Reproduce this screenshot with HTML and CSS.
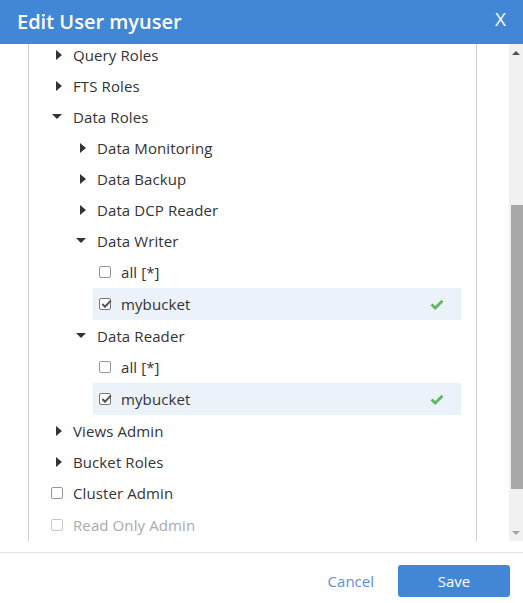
FILE: index.html
```html
<!DOCTYPE html>
<html>
<head>
<meta charset="utf-8">
<link rel="stylesheet" href="styles.css">
</head>
<body>
<div class="modal">
  <header class="hdr">
    <h1 class="title">Edit User myuser</h1>
    <span class="close">X</span>
  </header>
  <div class="body">
    <div class="panel">
      <ul class="tree">
        <li class="row l1"><span class="ico"><i class="tri-r"></i></span>Query Roles</li>
        <li class="row l1"><span class="ico"><i class="tri-r"></i></span>FTS Roles</li>
        <li class="row l1"><span class="ico"><i class="tri-d"></i></span>Data Roles</li>
        <li class="row l2"><span class="ico"><i class="tri-r"></i></span>Data Monitoring</li>
        <li class="row l2"><span class="ico"><i class="tri-r"></i></span>Data Backup</li>
        <li class="row l2"><span class="ico"><i class="tri-r"></i></span>Data DCP Reader</li>
        <li class="row l2"><span class="ico"><i class="tri-d"></i></span>Data Writer</li>
        <li class="row l3 tall"><span class="box"></span>all [*]</li>
        <li class="row l3 tall sel"><span class="box checked"><svg viewBox="0 0 12 12" width="12" height="12"><path d="M2.3 6 L5 8.7 L10.8 2.6" fill="none" stroke="#555" stroke-width="2"/></svg></span>mybucket<svg class="ok" viewBox="0 0 14 11" width="14" height="11"><path d="M1.5 5.5 L5.2 9 L12.5 1.8" fill="none" stroke="#5cb85c" stroke-width="2.8"/></svg></li>
        <li class="row l2"><span class="ico"><i class="tri-d"></i></span>Data Reader</li>
        <li class="row l3 tall"><span class="box"></span>all [*]</li>
        <li class="row l3 tall sel"><span class="box checked"><svg viewBox="0 0 12 12" width="12" height="12"><path d="M2.3 6 L5 8.7 L10.8 2.6" fill="none" stroke="#555" stroke-width="2"/></svg></span>mybucket<svg class="ok" viewBox="0 0 14 11" width="14" height="11"><path d="M1.5 5.5 L5.2 9 L12.5 1.8" fill="none" stroke="#5cb85c" stroke-width="2.8"/></svg></li>
        <li class="row l1"><span class="ico"><i class="tri-r"></i></span>Views Admin</li>
        <li class="row l1"><span class="ico"><i class="tri-r"></i></span>Bucket Roles</li>
        <li class="row l1 tall"><span class="box"></span>Cluster Admin</li>
        <li class="row l1 tall faded"><span class="box"></span>Read Only Admin</li>
      </ul>
    </div>
    <div class="gap"></div>
    <div class="scrollbar">
      <span class="sb-btn"><i class="sb-up"></i></span>
      <div class="track"><div class="thumb"></div></div>
      <span class="sb-btn"><i class="sb-down"></i></span>
    </div>
  </div>
  <footer class="ftr">
    <a class="cancel">Cancel</a>
    <button class="save">Save</button>
  </footer>
</div>
</body>
</html>
```
FILE: styles.css
```css
* { box-sizing: border-box; }
html, body { margin: 0; padding: 0; background: #fff; }
body {
  width: 523px;
  height: 603px;
  overflow: hidden;
  font-family: "Open Sans", "Noto Sans", sans-serif;
  color: #333;
}
.modal { display: flex; flex-direction: column; height: 603px; }
.hdr {
  height: 44px;
  background: #4286d6;
  color: #fff;
  display: flex;
  align-items: center;
  justify-content: space-between;
  padding: 0 17px 0 17px;
}
.title { margin: 0; font-size: 20px; font-weight: 600; letter-spacing: 0; margin-top: -2px; }
.close { font-size: 19px; font-weight: 400; margin-top: -6px; }
.body { display: flex; height: 497px; padding-left: 28px; }
.panel {
  width: 449px;
  height: 497px;
  border-left: 1px solid #d0d0d0;
  border-right: 1px solid #d0d0d0;
  overflow: hidden;
}
.tree { list-style: none; margin: -5px 0 0 0; padding: 0; }
.row {
  display: flex;
  align-items: center;
  height: 31px;
  font-size: 15px;
  letter-spacing: 0.1px;
  white-space: nowrap;
}
.row.tall { height: 32px; }
.l1 { padding-left: 22px; }
.l2 { padding-left: 46px; }
.l3 { margin-left: 64px; margin-right: 15px; padding-left: 6px; padding-right: 17px; }
.sel { background: #ebf2fa; }
.ico { width: 12px; height: 12px; display: flex; align-items: center; justify-content: center; margin-right: 10px; }
.tri-r {
  width: 0; height: 0;
  border-left: 6px solid #333;
  border-top: 5px solid transparent;
  border-bottom: 5px solid transparent;
  margin-left: 3px;
}
.tri-d {
  width: 0; height: 0;
  border-top: 5px solid #333;
  border-left: 5px solid transparent;
  border-right: 5px solid transparent;
}
.box {
  width: 12px; height: 12px;
  border: 1px solid #959595;
  border-radius: 2px;
  margin-right: 10px;
  position: relative;
  background: #fff;
}
.box svg { position: absolute; left: 0; top: -1px; }
.box.checked { border-color: #777; }
.ok { margin-left: auto; }
.faded { color: #aaa; }
.faded .box { border-color: #c8c8c8; }
.gap { flex: 1; }
.scrollbar {
  width: 14px;
  background: #f1f1f1;
  display: flex;
  flex-direction: column;
}
.sb-btn { height: 17px; display: flex; align-items: center; justify-content: center; }
.sb-up { width: 0; height: 0; border-bottom: 4px solid #505050; border-left: 4px solid transparent; border-right: 4px solid transparent; }
.sb-down { width: 0; height: 0; border-top: 4px solid #a3a3a3; border-left: 4px solid transparent; border-right: 4px solid transparent; }
.track { flex: 1; padding-top: 144px; }
.thumb { height: 284px; margin-left: 2px; background: #a8a8a8; }
.ftr {
  margin-top: 11px;
  border-top: 1px solid #e5e5e5;
  padding: 12px 13px 0 0;
  display: flex;
  justify-content: flex-end;
  align-items: center;
}
.cancel { color: #5b8fd9; font-size: 15px; margin-right: 24px; }
.save {
  width: 112px;
  height: 32px;
  background: #4286d6;
  color: #fff;
  border: none;
  border-radius: 3px;
  font-family: "Open Sans", "Noto Sans", sans-serif;
  font-size: 15px;
}
```
